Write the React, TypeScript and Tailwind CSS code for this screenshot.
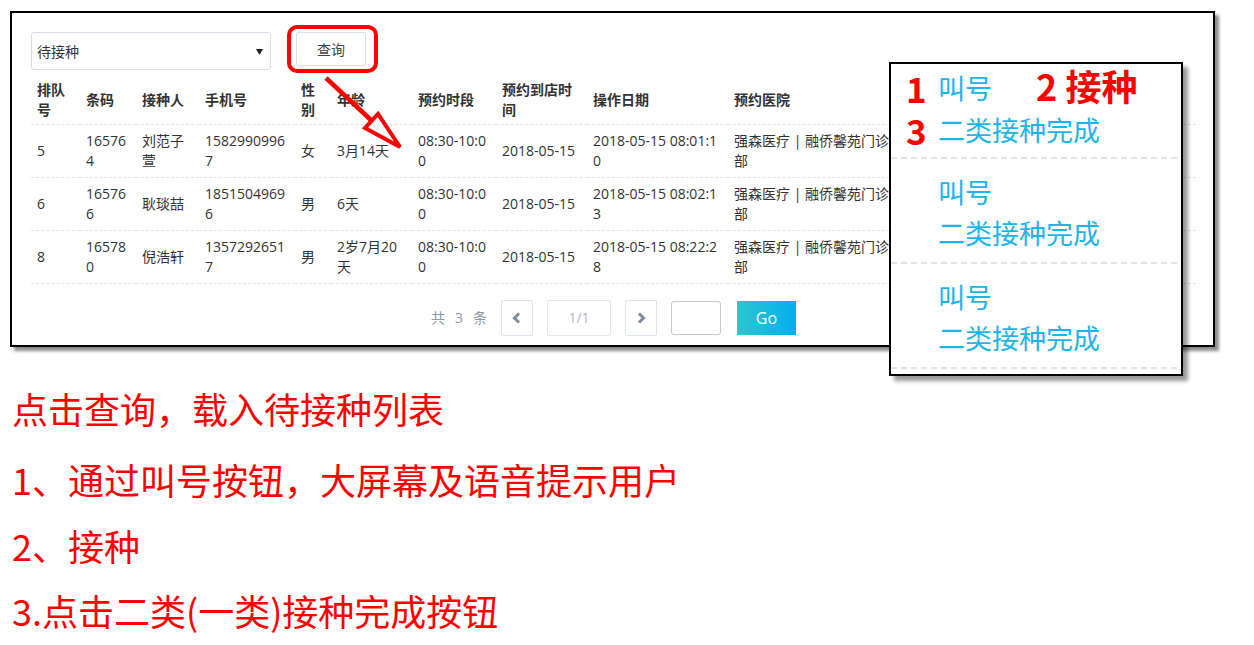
import React from "react";

const rows = [
  {
    no: "5",
    code: "165764",
    name: "刘范子萱",
    phone: "15829909967",
    sex: "女",
    age: "3月14天",
    slot: "08:30-10:00",
    date: "2018-05-15",
    op: "2018-05-15 08:01:10",
    hospital: "强森医疗 | 融侨馨苑门诊部",
  },
  {
    no: "6",
    code: "165766",
    name: "耿琰喆",
    phone: "18515049696",
    sex: "男",
    age: "6天",
    slot: "08:30-10:00",
    date: "2018-05-15",
    op: "2018-05-15 08:02:13",
    hospital: "强森医疗 | 融侨馨苑门诊部",
  },
  {
    no: "8",
    code: "165780",
    name: "倪浩轩",
    phone: "13572926517",
    sex: "男",
    age: "2岁7月20天",
    slot: "08:30-10:00",
    date: "2018-05-15",
    op: "2018-05-15 08:22:28",
    hospital: "强森医疗 | 融侨馨苑门诊部",
  },
];

const headers = [
  "排队号",
  "条码",
  "接种人",
  "手机号",
  "性别",
  "年龄",
  "预约时段",
  "预约到店时间",
  "操作日期",
  "预约医院",
  "",
];

const colWidths = [49, 56, 63, 96, 36, 81, 84, 91, 141, 172, 296];

const PageArrow = ({ dir }: { dir: "left" | "right" }) => (
  <svg width="10" height="12" viewBox="0 0 10 12">
    <polyline
      points={dir === "left" ? "7,1.5 2.5,6 7,10.5" : "3,1.5 7.5,6 3,10.5"}
      fill="none"
      stroke="#7c8a9b"
      strokeWidth="3"
      strokeLinejoin="miter"
    />
  </svg>
);

const ActionBlock = ({ first }: { first?: boolean }) => (
  <div
    className={
      first
        ? "h-[95px] pt-[3px] border-b-2 border-dashed border-[#dde4ea] mr-[4px]"
        : "h-[105px] pt-[12px] border-b-2 border-dashed border-[#dde4ea] mr-[4px]"
    }
  >
    <div className={first ? "flex items-center h-[42px]" : "flex items-center h-[41px]"}>
      <span className="w-[47px] pl-[15px] text-[35px] font-bold text-[#ff0000] leading-[36px]">
        {first ? "1" : ""}
      </span>
      <span className="text-[27px] leading-[30px] text-[#1db4ec]">叫号</span>
      {first && (
        <span className="ml-[44px] -mt-[6px] text-[36px] font-bold text-[#ff0000] leading-[36px]">
          2 接种
        </span>
      )}
    </div>
    <div className={first ? "flex items-center h-[42px]" : "flex items-center h-[41px]"}>
      <span className="w-[47px] pl-[15px] text-[35px] font-bold text-[#ff0000] leading-[36px]">
        {first ? "3" : ""}
      </span>
      <span className="text-[27px] leading-[30px] text-[#1db4ec]">二类接种完成</span>
    </div>
  </div>
);

export default function App() {
  return (
    <div className="relative w-[1254px] h-[645px] bg-white overflow-hidden font-['Open_Sans','Noto_Sans_CJK_SC',sans-serif]">
      <div className="pt-[11px] pl-[10px]">
        <div className="w-[1205px] h-[336px] border-2 border-black bg-white shadow-[4px_4px_3px_rgba(0,0,0,0.45)] pt-[19px] pl-[19px]">
          <div className="flex items-start gap-[25px]">
            <div className="relative w-[240px] h-[38px] border border-[#d6dde6] rounded-[3px] flex items-center pl-[5px] text-[14px] text-[#333]">
              待接种
              <svg className="absolute right-[7px] top-[16px]" width="7" height="6" viewBox="0 0 7 6">
                <polygon points="0,0 7,0 3.5,6" fill="#222" />
              </svg>
            </div>
            <div className="relative">
              <button className="w-[70px] h-[34px] border border-[#d9e1ea] rounded-[2px] bg-white text-[14px] text-[#444]">
                查询
              </button>
              <div className="absolute -left-[9px] -top-[7px] w-[91px] h-[48px] border-[4px] border-[#ff0000] rounded-[10px]" />
            </div>
          </div>

          <table className="mt-[6px] table-fixed border-collapse w-[1165px] text-[14px] leading-[20px] text-[#333]">
            <colgroup>
              {colWidths.map((w, i) => (
                <col key={i} style={{ width: w }} />
              ))}
            </colgroup>
            <thead>
              <tr className="border-b border-dashed border-[#dfe6ee]">
                {headers.map((h, i) => (
                  <th
                    key={i}
                    className="px-[6px] py-[3px] h-[48px] text-left align-middle font-bold break-all"
                  >
                    {h}
                  </th>
                ))}
              </tr>
            </thead>
            <tbody>
              {rows.map((r) => (
                <tr key={r.no} className="border-b border-dashed border-[#dfe6ee]">
                  {[r.no, r.code, r.name, r.phone, r.sex, r.age, r.slot, r.date, r.op, r.hospital, ""].map(
                    (v, i) => (
                      <td key={i} className="px-[6px] py-[6px] h-[53px] align-middle break-all">
                        {v}
                      </td>
                    )
                  )}
                </tr>
              ))}
            </tbody>
          </table>

          <div className="mt-[16px] w-[1165px] flex justify-center items-center text-[14px]">
            <div className="flex gap-[10px] text-[#8d99a8] mr-[14px]">
              <span>共</span>
              <span>3</span>
              <span>条</span>
            </div>
            <div className="w-[32px] h-[36px] border border-[#dde5ee] rounded-[2px] flex items-center justify-center">
              <PageArrow dir="left" />
            </div>
            <div className="ml-[14px] w-[64px] h-[36px] border border-[#e2e8f0] rounded-[2px] flex items-center justify-center text-[#aeb8c4]">
              1/1
            </div>
            <div className="ml-[14px] w-[32px] h-[36px] border border-[#dde5ee] rounded-[2px] flex items-center justify-center">
              <PageArrow dir="right" />
            </div>
            <div className="ml-[14px] w-[50px] h-[34px] border border-[#c8c8c8] rounded-[3px]" />
            <div className="ml-[16px] w-[59px] h-[34px] bg-gradient-to-r from-[#2cc6ce] to-[#00aeef] flex items-center justify-center text-white text-[16px]">
              Go
            </div>
          </div>
        </div>
      </div>

      <div className="mt-[43px] pl-[12px] text-[#ff0000] text-[36px] leading-[36px] font-['Noto_Sans_CJK_SC',sans-serif]">
        <div className="h-[36px]">点击查询，载入待接种列表</div>
        <div className="h-[36px] mt-[35px]">1、通过叫号按钮，大屏幕及语音提示用户</div>
        <div className="h-[36px] mt-[30px]">2、接种</div>
        <div className="h-[36px] mt-[29px]">3.点击二类(一类)接种完成按钮</div>
      </div>

      {/* red annotation arrow */}
      <svg className="absolute left-[318px] top-[70px]" width="92" height="88" viewBox="0 0 92 88">
        <line x1="8" y1="8" x2="54" y2="51" stroke="#ff0000" strokeWidth="4.5" />
        <polygon points="82,77 47,58 60,44" fill="#fff" stroke="#ff0000" strokeWidth="4" strokeLinejoin="miter" />
      </svg>

      {/* zoomed action column */}
      <div className="absolute left-[889px] top-[62px] w-[294px] h-[314px] border-2 border-black bg-white shadow-[5px_5px_4px_rgba(0,0,0,0.4)] font-['Noto_Sans_CJK_SC',sans-serif]">
        <ActionBlock first />
        <ActionBlock />
        <ActionBlock />
      </div>
    </div>
  );
}
